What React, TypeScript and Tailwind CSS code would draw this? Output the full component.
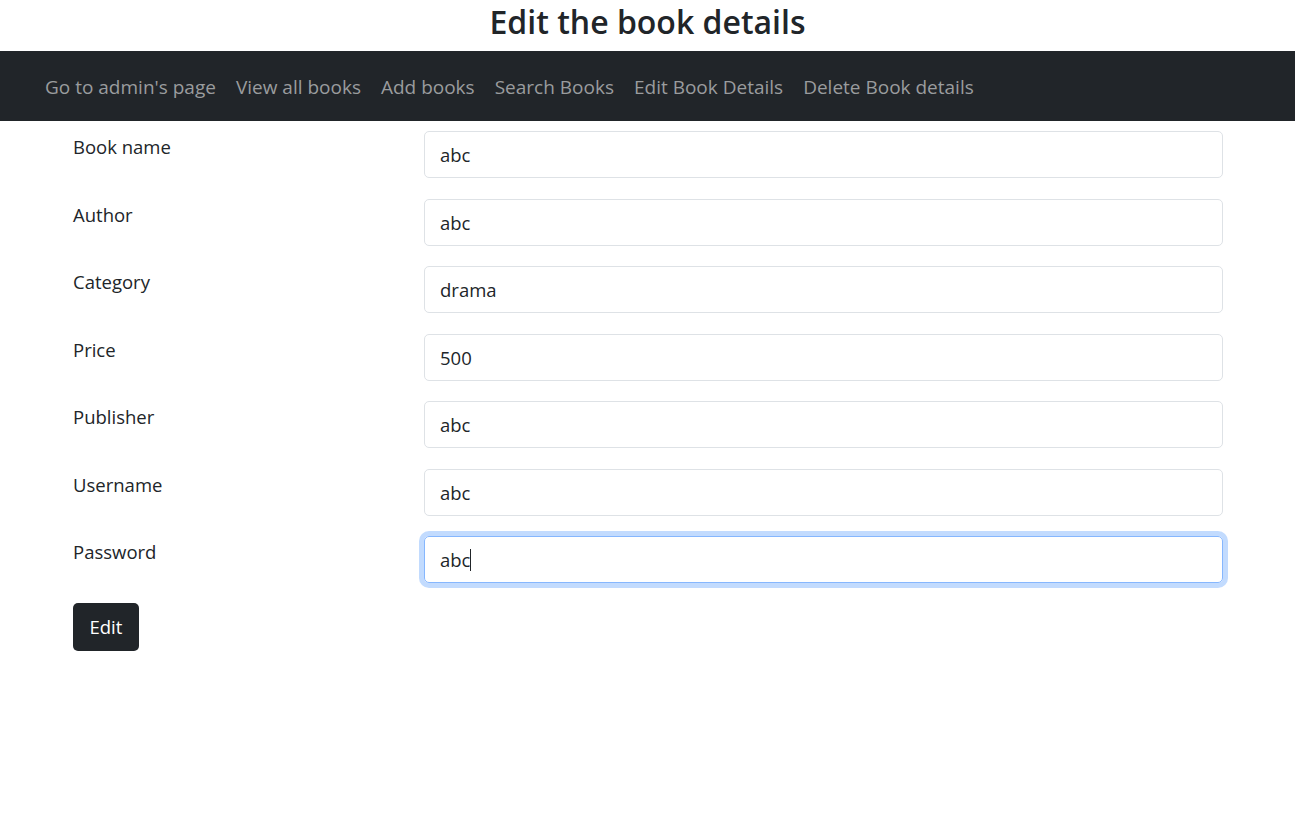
import React from 'react'

const navLinks = [
  "Go to admin's page",
  'View all books',
  'Add books',
  'Search Books',
  'Edit Book Details',
  'Delete Book details',
]

const fields = [
  { label: 'Book name', value: 'abc' },
  { label: 'Author', value: 'abc' },
  { label: 'Category', value: 'drama' },
  { label: 'Price', value: '500' },
  { label: 'Publisher', value: 'abc' },
  { label: 'Username', value: 'abc' },
]

export default function App() {
  return (
    <div className="min-h-screen bg-white text-[#212529] font-['Open_Sans',sans-serif]">
      <h3 className="h-[51px] pt-[1px] text-center text-[32px] font-semibold leading-[42px]">
        Edit the book details
      </h3>

      {/* Navbar */}
      <nav className="h-[70px] bg-[#212529] flex items-center pl-[35px] pt-[1px]">
        <ul className="flex items-center">
          {navLinks.map((link) => (
            <li key={link}>
              <a href="#" className="block px-[10px] text-[19px] text-[#9a9c9e] leading-[30px]">
                {link}
              </a>
            </li>
          ))}
        </ul>
      </nav>

      {/* Form */}
      <form className="pl-[73px] pr-[72px] pt-[10px]" onSubmit={(e) => e.preventDefault()}>
        {fields.map((f) => (
          <div key={f.label} className="flex mb-[20.5px]">
            <label className="w-[351px] shrink-0 text-[18.5px] leading-[30px] pt-[1px]">{f.label}</label>
            <input
              type="text"
              defaultValue={f.value}
              className="flex-1 h-[47px] px-[15px] border border-[#dee2e6] rounded-[5px] text-[18.5px] text-[#212529] outline-none"
            />
          </div>
        ))}

        <div className="flex mb-[20px]">
          <label className="w-[351px] shrink-0 text-[18.5px] leading-[30px] pt-[1px]">Password</label>
          <div className="flex-1 h-[47px] px-[15px] flex items-center border border-[#86b7fe] rounded-[5px] text-[18.5px] shadow-[0_0_0_5px_rgba(13,110,253,0.25)]">
            <span>abc</span>
            <span className="inline-block w-px h-[22px] bg-[#212529]" />
          </div>
        </div>

        <button
          type="submit"
          className="h-[48px] px-[16.5px] bg-[#212529] text-white text-[18.5px] rounded-[5px]"
        >
          Edit
        </button>
      </form>
    </div>
  )
}
